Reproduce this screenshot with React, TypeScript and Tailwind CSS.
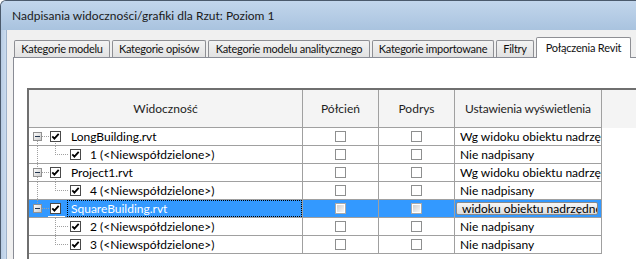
import React from 'react';

type Row = {
  kind: 'root' | 'child';
  label: string;
  first?: boolean;
  last?: boolean;
  parentLast?: boolean;
  lastChild?: boolean;
  selected?: boolean;
  col4: string;
};

const rows: Row[] = [
  { kind: 'root', label: 'LongBuilding.rvt', first: true, last: false, col4: 'Wg widoku obiektu nadrzędnego' },
  { kind: 'child', label: '1 (<Niewspółdzielone>)', parentLast: false, lastChild: true, col4: 'Nie nadpisany' },
  { kind: 'root', label: 'Project1.rvt', first: false, last: false, col4: 'Wg widoku obiektu nadrzędnego' },
  { kind: 'child', label: '4 (<Niewspółdzielone>)', parentLast: false, lastChild: true, col4: 'Nie nadpisany' },
  { kind: 'root', label: 'SquareBuilding.rvt', first: false, last: true, selected: true, col4: 'widoku obiektu nadrzędnego' },
  { kind: 'child', label: '2 (<Niewspółdzielone>)', parentLast: true, lastChild: false, col4: 'Nie nadpisany' },
  { kind: 'child', label: '3 (<Niewspółdzielone>)', parentLast: true, lastChild: true, col4: 'Nie nadpisany' },
];

function CheckMark() {
  return (
    <svg width="9" height="9" viewBox="0 0 9 9">
      <path d="M1.3 4.3 L3.4 6.6 L7.7 1.8" stroke="#000" strokeWidth="1.8" fill="none" />
    </svg>
  );
}

function TreeCheck() {
  return (
    <span className="w-[11px] h-[11px] border border-[#4a4a4a] bg-white flex items-center justify-center shrink-0">
      <CheckMark />
    </span>
  );
}

function EmptyCheck({ disabled }: { disabled?: boolean }) {
  if (disabled) {
    return (
      <span className="w-[11px] h-[11px] border border-[#a9a9a9] bg-white p-px flex shrink-0">
        <span className="flex-1 bg-gradient-to-br from-[#cfcfcf] to-[#f7f7f7]" />
      </span>
    );
  }
  return <span className="w-[11px] h-[11px] border border-[#8e8f8f] bg-white shrink-0" />;
}

const dot = { stroke: '#a0a0a0', strokeWidth: 1, strokeDasharray: '1 1' };

function TreeLines({ r }: { r: Row }) {
  return (
    <svg className="absolute left-0 top-0" width="44" height="17" viewBox="0 0 44 17">
      <defs>
        <linearGradient id="bx" x1="0" y1="0" x2="1" y2="1">
          <stop offset="0" stopColor="#ffffff" />
          <stop offset="1" stopColor="#c8c8c8" />
        </linearGradient>
      </defs>
      {r.kind === 'root' ? (
        <>
          {!r.first && <line x1="8.5" y1="0" x2="8.5" y2="4" {...dot} />}
          {!r.last && <line x1="8.5" y1="13" x2="8.5" y2="17" {...dot} />}
          <line x1="13" y1="8.5" x2="21" y2="8.5" {...dot} />
          <line x1="26.5" y1="15" x2="26.5" y2="17" {...dot} />
          <rect x="4.5" y="4.5" width="8" height="8" fill="url(#bx)" stroke="#919191" />
          <line x1="6" y1="8.5" x2="11" y2="8.5" stroke="#23364f" strokeWidth="1" />
        </>
      ) : (
        <>
          {!r.parentLast && <line x1="8.5" y1="0" x2="8.5" y2="17" {...dot} />}
          <line x1="26.5" y1="0" x2="26.5" y2={r.lastChild ? 9 : 17} {...dot} />
          <line x1="28" y1="8.5" x2="40" y2="8.5" {...dot} />
        </>
      )}
    </svg>
  );
}

const tabs = [
  { label: 'Kategorie modelu', w: 'w-[96px]' },
  { label: 'Kategorie opisów', w: 'w-[94px]' },
  { label: 'Kategorie modelu analitycznego', w: 'w-[162px]' },
  { label: 'Kategorie importowane', w: 'w-[122px]' },
  { label: 'Filtry', w: 'w-[38px]' },
];

export default function App() {
  return (
    <div className="w-[636px] h-[259px] overflow-hidden flex flex-col bg-[#bcd1e9] border-t border-l border-[#4b5a6c] rounded-tl-[6px] font-['Lato',sans-serif] text-[12px] text-black">
      {/* title bar */}
      <div className="h-[29px] shrink-0 flex items-center pl-[11px] bg-gradient-to-b from-[#c2d6ec] to-[#a9c3df] text-[12px] text-[#1a1a1a]">
        Nadpisania widoczności/grafiki dla Rzut: Poziom 1
      </div>
      <div className="flex flex-1 min-h-0">
        {/* left frame */}
        <div className="w-[6px] bg-gradient-to-r from-[#b7cce4] to-[#cbdcef] border-r border-[#9fb3cb] shrink-0" />
        {/* dialog */}
        <div className="flex-1 bg-[#f0f0f0] pl-[6px] pt-[7px] flex flex-col min-w-0">
          {/* tabs */}
          <div className="h-[20px] flex items-end gap-[2px] pl-[1px] shrink-0">
            {tabs.map((t) => (
              <div
                key={t.label}
                className={`${t.w} h-[17px] shrink-0 flex items-center justify-center border border-b-0 border-[#8e8f94] rounded-t-[2px] bg-gradient-to-b from-[#f3f3f3] to-[#e2e2e2] whitespace-nowrap text-[#111] text-[11px] tracking-[-0.25px]`}
              >
                {t.label}
              </div>
            ))}
            <div className="w-[95px] h-[21px] -mb-px relative z-10 shrink-0 flex items-start pt-[2px] justify-center border border-b-0 border-[#8e8f94] rounded-t-[2px] bg-white whitespace-nowrap text-[#111] text-[11px] tracking-[-0.2px]">
              Połączenia Revit
            </div>
          </div>
          {/* panel */}
          <div className="flex-1 bg-white border-l border-t border-[#898c95] pl-[13px] pt-[30px] min-h-0">
            <div className="h-full border-l-2 border-t-2 border-[#6f6f6f] flex flex-col">
              {/* header */}
              <div className="h-[38px] shrink-0 flex bg-[#f4f4f4] text-[#1e1e1e]">
                <div className="w-[274px] shrink-0 border-r border-b border-[#a0a0a0] flex items-center justify-center">Widoczność</div>
                <div className="w-[76px] shrink-0 border-r border-b border-[#a0a0a0] flex items-center justify-center">Półcień</div>
                <div className="w-[76px] shrink-0 border-r border-b border-[#a0a0a0] flex items-center justify-center">Podrys</div>
                <div className="w-[147px] shrink-0 border-r border-b border-[#a0a0a0] flex items-center justify-center whitespace-nowrap tracking-[-0.15px]">Ustawienia wyświetlenia</div>
                <div className="flex-1" />
              </div>
              {rows.map((r, i) => {
                const sel = !!r.selected;
                const cellBg = sel ? 'bg-[#3399ff]' : 'bg-white';
                return (
                  <div key={i} className="h-[18px] shrink-0 flex">
                    <div className={`w-[274px] shrink-0 border-r border-b border-[#a0a0a0] relative flex items-center ${cellBg} ${r.kind === 'root' ? 'pl-[21px]' : 'pl-[41px]'}`}>
                      <TreeLines r={r} />
                      <span className="relative">
                        <TreeCheck />
                      </span>
                      {sel && <span className="absolute left-[19px] bottom-0 w-[17px] h-px bg-white" />}
                      {r.kind === 'root' ? (
                        sel ? (
                          <span className="ml-[6px] flex-1 h-[17px] border border-dotted border-black pl-[3px] leading-[15px] text-white whitespace-nowrap">
                            {r.label}
                          </span>
                        ) : (
                          <span className="ml-[10px] leading-[17px] whitespace-nowrap">{r.label}</span>
                        )
                      ) : (
                        <span className="ml-[9px] leading-[17px] whitespace-nowrap">{r.label}</span>
                      )}
                    </div>
                    <div className={`w-[76px] shrink-0 border-r border-b border-[#a0a0a0] flex items-center justify-center ${cellBg}`}>
                      <EmptyCheck disabled={sel} />
                    </div>
                    <div className={`w-[76px] shrink-0 border-r border-b border-[#a0a0a0] flex items-center justify-center ${cellBg}`}>
                      <EmptyCheck disabled={sel} />
                    </div>
                    <div className={`w-[147px] shrink-0 border-r border-b border-[#a0a0a0] overflow-hidden flex items-center ${cellBg} ${sel ? 'pl-px pr-[3px]' : 'pl-[5px]'}`}>
                      {sel ? (
                        <div className="flex-1 h-[13px] border border-[#8a8a8a] rounded-[2px] bg-gradient-to-b from-[#f6f6f6] to-[#dcdcdc] overflow-hidden pl-[5px] leading-[11px] whitespace-nowrap">
                          {r.col4}
                        </div>
                      ) : (
                        <span className="leading-[17px] whitespace-nowrap">{r.col4}</span>
                      )}
                    </div>
                    <div className="flex-1" />
                  </div>
                );
              })}
            </div>
          </div>
        </div>
      </div>
    </div>
  );
}
